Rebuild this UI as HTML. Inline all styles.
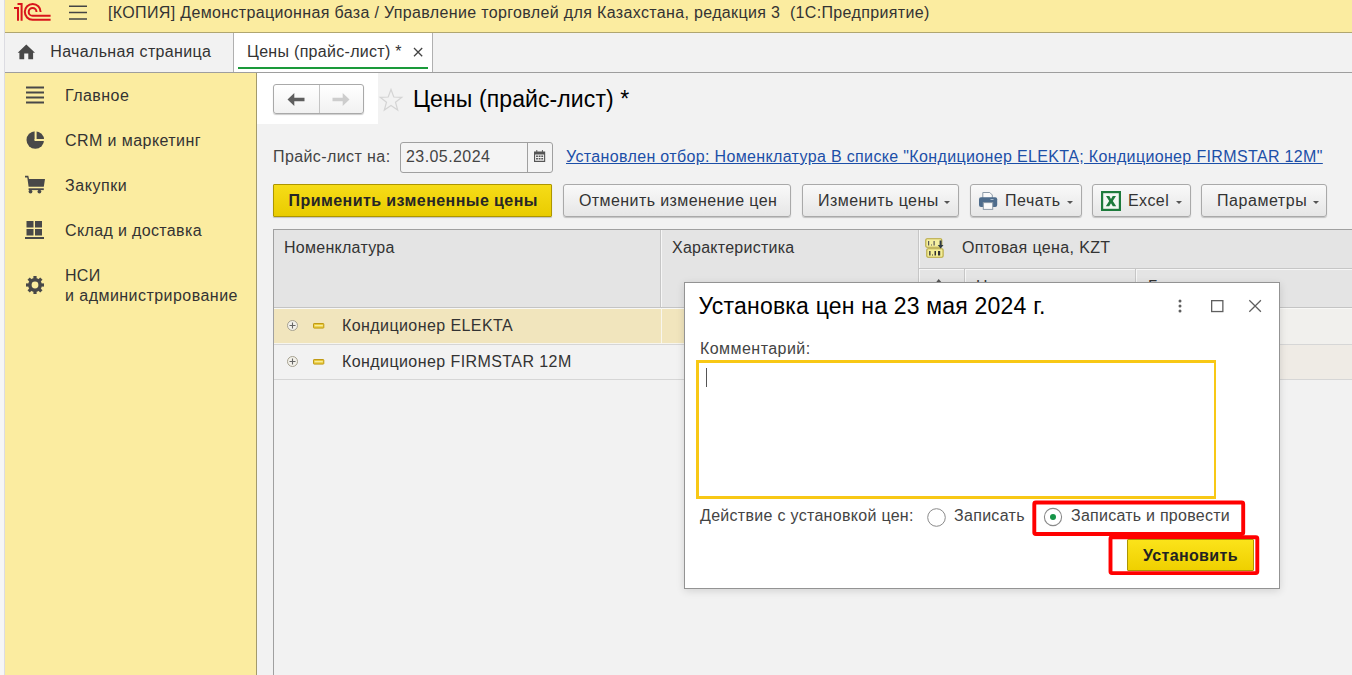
<!DOCTYPE html>
<html><head><meta charset="utf-8">
<style>
*{box-sizing:border-box;margin:0;padding:0}
html,body{width:1352px;height:675px;overflow:hidden;background:#f2f2f2}
body{position:relative;font-family:"Liberation Sans",sans-serif;font-size:16px;color:#333;letter-spacing:0.3px}
.a{position:absolute}
.t{position:absolute;white-space:pre;line-height:18px}
svg{position:absolute;overflow:visible}
.btn{position:absolute;border:1px solid #a9a9a9;border-radius:3px;background:linear-gradient(#f9f9f9,#e6e6e6);box-shadow:0 1px 1px rgba(0,0,0,0.2)}
.dd{position:absolute;width:0;height:0;border-left:3px solid transparent;border-right:3px solid transparent;border-top:3px solid #555}
</style></head><body>
<!-- left strip -->
<div class="a" style="left:0;top:0;width:5px;height:675px;background:#f6f6f6;border-right:1px solid #dcdce2"></div>
<!-- header -->
<div class="a" style="left:5px;top:0;width:1347px;height:33px;background:#fbeca0;border-bottom:1px solid #b0a670"></div>
<!-- 1C logo -->
<svg style="left:0;top:0" width="60" height="32" viewBox="0 0 60 32">
  <g fill="none" stroke="#d9141b" stroke-width="2">
    <path d="M14 8 H18 V20.8 M17.5 4 H21.6 V20.8"/>
    <path d="M40.6 11.9 A7.9 7.9 0 1 0 32.6 19.8 H50.6"/>
    <path d="M36.5 11.9 A3.9 3.9 0 1 0 32.6 15.8 H50.6"/>
  </g>
</svg>
<!-- hamburger -->
<svg style="left:69px;top:5px" width="18" height="15">
  <g stroke="#444" stroke-width="1.5"><path d="M0 1.3H18M0 7.5H18M0 14H18"/></g>
</svg>
<div class="t" style="left:108px;top:4px;color:#333;letter-spacing:0.35px">[КОПИЯ] Демонстрационная база / Управление торговлей для Казахстана, редакция 3  (1С:Предприятие)</div>

<!-- tab bar -->
<div class="a" style="left:5px;top:33px;width:1347px;height:40px;background:#f2f2f2;border-bottom:1px solid #9e9e9e"></div>
<svg style="left:17px;top:44px" width="19" height="16" viewBox="0 0 19 16">
  <path d="M9.3 0.5 L18 8.8 H16.1 V15.2 H11.3 V9.4 H7.2 V15.2 H2.4 V8.8 H0.7 Z" fill="#484848"/>
</svg>
<div class="t" style="left:50.3px;top:43px;color:#333;letter-spacing:0.34px">Начальная страница</div>
<div class="a" style="left:233px;top:33px;width:200px;height:39px;background:#fff;border-left:1px solid #b0b0b0;border-right:1px solid #b0b0b0"></div>
<div class="t" style="left:247px;top:43px;color:#333">Цены (прайс-лист) *</div>
<svg style="left:413px;top:47px" width="10" height="10"><g stroke="#444" stroke-width="1.3"><path d="M1 1L9.2 9.2M9.2 1L1 9.2"/></g></svg>
<div class="a" style="left:238px;top:67px;width:190px;height:2px;background:#1a9a3a"></div>

<!-- sidebar -->
<div class="a" style="left:5px;top:73px;width:252px;height:602px;background:#fbeca0;border-right:1px solid #a39a6c"></div>
<svg style="left:26px;top:86px" width="18" height="18"><g stroke="#484848" stroke-width="2.2"><path d="M0 1.5H18M0 6.5H18M0 11.5H18M0 16.5H18"/></g></svg>
<div class="t" style="left:65px;top:87px;letter-spacing:0.45px">Главное</div>
<svg style="left:20px;top:128px" width="30" height="30" viewBox="0 0 30 30">
  <circle cx="15.3" cy="12" r="8.8" fill="#484848"/>
  <rect x="14.6" y="1" width="2" height="11.2" fill="#fbeca0"/>
  <rect x="14.6" y="11" width="12" height="2" fill="#fbeca0"/>
</svg>
<div class="t" style="left:65px;top:132px;letter-spacing:0.43px">CRM и маркетинг</div>
<svg style="left:20px;top:170px" width="30" height="30" viewBox="0 0 30 30">
  <g fill="#484848">
  <path d="M5 5.8 H8.3 L9 9 H25 L23.8 16.8 H8.6 L7.3 7.4 H5 Z"/>
  <rect x="8.6" y="18.3" width="15.2" height="1.8"/>
  <circle cx="10.5" cy="21.6" r="1.9"/><circle cx="19.4" cy="21.6" r="1.9"/>
  </g>
</svg>
<div class="t" style="left:65px;top:177px;letter-spacing:0.55px">Закупки</div>
<svg style="left:25px;top:221px" width="19" height="18" viewBox="0 0 19 18">
  <g fill="#484848"><rect x="1.5" y="0" width="7" height="6.5"/><rect x="10" y="0" width="7" height="6.5"/><rect x="1.5" y="8" width="7" height="6.5"/><rect x="10" y="8" width="7" height="6.5"/><rect x="0" y="16" width="19" height="2"/></g>
</svg>
<div class="t" style="left:65px;top:222px;letter-spacing:0.36px">Склад и доставка</div>
<svg style="left:20px;top:270px" width="30" height="30" viewBox="0 0 30 30">
  <g transform="translate(15 15)" fill="#484848"><rect x="-1.6" y="-9" width="3.2" height="4" transform="rotate(0)"/><rect x="-1.6" y="-9" width="3.2" height="4" transform="rotate(45)"/><rect x="-1.6" y="-9" width="3.2" height="4" transform="rotate(90)"/><rect x="-1.6" y="-9" width="3.2" height="4" transform="rotate(135)"/><rect x="-1.6" y="-9" width="3.2" height="4" transform="rotate(180)"/><rect x="-1.6" y="-9" width="3.2" height="4" transform="rotate(225)"/><rect x="-1.6" y="-9" width="3.2" height="4" transform="rotate(270)"/><rect x="-1.6" y="-9" width="3.2" height="4" transform="rotate(315)"/>
  <circle r="6.9"/></g>
  <circle cx="15" cy="15" r="3.4" fill="#fbeca0"/>
</svg>
<div class="t" style="left:65px;top:267px">НСИ</div>
<div class="t" style="left:65px;top:287px;letter-spacing:0.46px">и администрирование</div>

<!-- content -->
<div class="a" style="left:257px;top:73px;width:121px;height:51px;background:#fff"></div>
<div class="btn" style="left:273px;top:84px;width:91px;height:30px;border-radius:3px;background:linear-gradient(#fff,#f1f1f1)"></div>
<div class="a" style="left:319px;top:85px;width:1px;height:28px;background:#c4c4c4"></div>
<svg style="left:287px;top:92px" width="18" height="15" viewBox="0 0 18 15"><path d="M0.5 7.5 L7.3 1 V5.7 H17.5 V9.3 H7.3 V14 Z" fill="#5e5e5e"/></svg>
<svg style="left:332px;top:92px" width="18" height="15" viewBox="0 0 18 15"><path d="M17.5 7.5 L10.7 1 V5.7 H0.5 V9.3 H10.7 V14 Z" fill="#cdcdcd"/></svg>
<svg style="left:379px;top:88px" width="24" height="24" viewBox="0 0 24 24"><path d="M12 1.5 L14.8 9 L22.8 9.3 L16.5 14.2 L18.7 22 L12 17.5 L5.3 22 L7.5 14.2 L1.2 9.3 L9.2 9 Z" fill="none" stroke="#d4d4d4" stroke-width="1.2"/></svg>
<div class="t" style="left:413px;top:86px;font-size:23px;line-height:26px;color:#000;letter-spacing:0.1px">Цены (прайс-лист) *</div>

<div class="t" style="left:273px;top:148px;color:#444;letter-spacing:0.41px">Прайс-лист на:</div>
<div class="a" style="left:400px;top:142px;width:153px;height:31px;border:1px solid #a0a0a0;border-radius:3px;background:#f4f4f4"></div>
<div class="a" style="left:527px;top:143px;width:1px;height:29px;background:#a0a0a0"></div>
<div class="t" style="left:406px;top:148px;color:#444;letter-spacing:0.42px">23.05.2024</div>
<svg style="left:534px;top:150px" width="11.2" height="12" viewBox="0 0 12 12" preserveAspectRatio="none"><path fill="#555" fill-rule="evenodd" d="M0 1.5H2.5V0H3.5V1.5H8.5V0H9.5V1.5H12V12H0Z M1.2 4.5V10.8H10.8V4.5Z M2.2 5.5H4.2V7H2.2Z M5 5.5H7V7H5Z M7.8 5.5H9.8V7H7.8Z M2.2 8H4.2V9.6H2.2Z M5 8H7V9.6H5Z M7.8 8H9.8V9.6H7.8Z"/></svg>
<div class="t" style="left:566px;top:148px;color:#1c4fa8;text-decoration:underline;letter-spacing:0.35px">Установлен отбор: Номенклатура В списке "Кондиционер ELEKTA; Кондиционер FIRMSTAR 12M"</div>

<!-- toolbar -->
<div class="a" style="left:273px;top:184px;width:279px;height:33px;border:1px solid #ad9600;border-radius:1px;background:linear-gradient(#f6dc18,#e9cc00);box-shadow:0 1px 1px rgba(0,0,0,0.2)"></div>
<div class="t" style="left:288.6px;top:192px;font-weight:bold;color:#262626;letter-spacing:0.43px">Применить измененные цены</div>
<div class="btn" style="left:563px;top:184px;width:228px;height:33px"></div>
<div class="t" style="left:579px;top:192px;letter-spacing:0.41px">Отменить изменение цен</div>
<div class="btn" style="left:802px;top:184px;width:157px;height:33px"></div>
<div class="t" style="left:818px;top:192px;letter-spacing:0.45px">Изменить цены</div>
<div class="dd" style="left:944px;top:201px"></div>
<div class="btn" style="left:970px;top:184px;width:112px;height:33px"></div>
<svg style="left:975px;top:186px" width="26" height="30" viewBox="0 0 26 30">
<path d="M7.8 6.5 H14.8 L17.3 9 V13 H7.8 Z" fill="#fafafa" stroke="#8c9aa8" stroke-width="1"/>
<rect x="4" y="11.2" width="18.2" height="9.8" rx="2" fill="#4e6c8c"/>
<rect x="15.5" y="13" width="3" height="1" fill="#a8bccf"/>
<rect x="8.3" y="16.6" width="9.4" height="6.8" fill="#fafafa" stroke="#8c9aa8" stroke-width="1"/>
</svg>
<div class="t" style="left:1005px;top:192px;letter-spacing:0.55px">Печать</div>
<div class="dd" style="left:1067px;top:201px"></div>
<div class="btn" style="left:1092px;top:184px;width:99px;height:33px"></div>
<svg style="left:1101px;top:191px" width="20" height="20" viewBox="0 0 20 20"><rect x="1.1" y="1.1" width="17.8" height="17.8" fill="#f4f8f4" stroke="#1e7b3c" stroke-width="2.2"/><path d="M5 5H8.3L10 8L11.7 5H15L11.8 9.9L15.2 15.3H11.8L10 12.2L8.2 15.3H4.8L8.2 9.9Z" fill="#1e7b3c"/></svg>
<div class="t" style="left:1128px;top:192px;letter-spacing:0.4px">Excel</div>
<div class="dd" style="left:1176px;top:201px"></div>
<div class="btn" style="left:1201px;top:184px;width:126px;height:33px"></div>
<div class="t" style="left:1217px;top:192px;letter-spacing:0.55px">Параметры</div>
<div class="dd" style="left:1313px;top:201px"></div>

<!-- table -->
<div class="a" style="left:273px;top:229px;width:1079px;height:446px;border-left:1px solid #a0a0a0;border-top:1px solid #a0a0a0;background:#f2f2f2"></div>
<div class="a" style="left:274px;top:230px;width:1078px;height:78px;background:#e4e4e4;border-bottom:1px solid #c4c4c4"></div>
<div class="a" style="left:660px;top:230px;width:1px;height:77px;background:#c6c6c6"></div><div class="a" style="left:661px;top:230px;width:1px;height:77px;background:#f6f6f6"></div>
<div class="a" style="left:918px;top:230px;width:1px;height:77px;background:#c6c6c6"></div><div class="a" style="left:919px;top:230px;width:1px;height:77px;background:#f6f6f6"></div>
<div class="a" style="left:919px;top:268px;width:433px;height:1px;background:#c6c6c6"></div><div class="a" style="left:920px;top:269px;width:432px;height:1px;background:#f6f6f6"></div>
<div class="a" style="left:964px;top:269px;width:1px;height:38px;background:#c6c6c6"></div><div class="a" style="left:965px;top:269px;width:1px;height:38px;background:#f6f6f6"></div>
<div class="a" style="left:1135px;top:269px;width:1px;height:38px;background:#c6c6c6"></div><div class="a" style="left:1136px;top:269px;width:1px;height:38px;background:#f6f6f6"></div>
<div class="t" style="left:284px;top:239px;letter-spacing:0.27px">Номенклатура</div>
<div class="t" style="left:672px;top:239px;letter-spacing:0.25px">Характеристика</div>
<svg style="left:920px;top:232px" width="30" height="30" viewBox="0 0 30 30">
<rect x="5.8" y="6.7" width="16" height="8.6" rx="1.2" fill="#f4eea0" stroke="#b5a53a" stroke-width="1.1"/>
<rect x="6.8" y="16.7" width="16.3" height="8.6" rx="1.2" fill="#f4ee98" stroke="#b5a53a" stroke-width="1.1"/>
<g fill="#555"><rect x="8" y="9" width="1.2" height="4.5"/><rect x="11" y="12.5" width="1" height="1"/><rect x="13.5" y="9" width="1.2" height="4.5"/></g>
<g fill="#333"><rect x="9.2" y="19" width="1.3" height="4.5"/><rect x="12" y="22.5" width="1" height="1"/><rect x="14.5" y="19" width="1.5" height="4.5"/><rect x="18" y="19" width="2.2" height="4.5"/></g>
<path d="M19.6 8.5 H21.6 V13 H23.5 L20.6 16.6 L17.7 13 H19.6 Z" fill="#2f3a44"/>
</svg>
<div class="t" style="left:962px;top:239px;letter-spacing:0.37px">Оптовая цена, KZT</div>
<svg style="left:935px;top:278px" width="8" height="6"><path d="M0.5 5 L3.7 1 L7 5 Z" fill="#555"/></svg><div class="t" style="left:976px;top:278px">Ц</div>
<div class="t" style="left:1148px;top:278px">Б</div>
<!-- rows -->
<div class="a" style="left:274px;top:308px;width:1078px;height:37px;background:#f1f0ed;border-bottom:1px solid #d6d6d6"></div>
<div class="a" style="left:274px;top:308px;width:1078px;height:1px;background:#f8f8f6"></div><div class="a" style="left:274px;top:309px;width:410px;height:34px;background:#f1e5bd"></div><div class="a" style="left:274px;top:343px;width:410px;height:1px;background:#f7f5ee"></div>
<div class="a" style="left:274px;top:345px;width:1078px;height:35px;background:#f2f2f2;border-bottom:1px solid #d6d6d6"></div>
<div class="a" style="left:1136px;top:345px;width:216px;height:34px;background:#efebe5"></div>
<div class="a" style="left:661px;top:308px;width:1px;height:36px;background:#f8f6ee"></div>
<svg style="left:287px;top:320px" width="12" height="12" viewBox="0 0 12 12"><circle cx="5.5" cy="5.5" r="5" fill="#f3f1ea" stroke="#a6a190"/><path d="M5.5 2.5V8.5M2.5 5.5H8.5" stroke="#666" stroke-width="1.1"/></svg>
<svg style="left:313px;top:323px" width="12" height="6"><rect x="0.5" y="0.5" width="10.3" height="4.6" rx="0.6" fill="#e9c93a" stroke="#c09a14"/><rect x="1.6" y="2" width="8.2" height="1.3" fill="#f8ec9a"/></svg>
<div class="t" style="left:342px;top:317px;letter-spacing:0.42px">Кондиционер ELEKTA</div>
<svg style="left:287px;top:356px" width="12" height="12" viewBox="0 0 12 12"><circle cx="5.5" cy="5.5" r="5" fill="#f3f1ea" stroke="#a6a190"/><path d="M5.5 2.5V8.5M2.5 5.5H8.5" stroke="#666" stroke-width="1.1"/></svg>
<svg style="left:313px;top:359px" width="12" height="6"><rect x="0.5" y="0.5" width="10.3" height="4.6" rx="0.6" fill="#e9c93a" stroke="#c09a14"/><rect x="1.6" y="2" width="8.2" height="1.3" fill="#f8ec9a"/></svg>
<div class="t" style="left:342px;top:353px;letter-spacing:0.42px">Кондиционер FIRMSTAR 12M</div>

<!-- dialog -->
<div class="a" style="left:684px;top:282px;width:596px;height:307px;background:#fff;border:1px solid #939393;box-shadow:0 2px 8px rgba(0,0,0,0.13)"></div>
<div class="t" style="left:698.6px;top:293px;font-size:23px;line-height:26px;color:#000;letter-spacing:0.2px">Установка цен на 23 мая 2024 г.</div>
<svg style="left:1178px;top:299px" width="4" height="14"><g fill="#5f5f5f"><circle cx="2" cy="2" r="1.5"/><circle cx="2" cy="7" r="1.5"/><circle cx="2" cy="12.1" r="1.5"/></g></svg>
<svg style="left:1211px;top:300px" width="13" height="12"><rect x="0.65" y="0.65" width="11.2" height="10.9" fill="none" stroke="#5f5f5f" stroke-width="1.3"/></svg>
<svg style="left:1249px;top:300px" width="13" height="12"><g stroke="#5f5f5f" stroke-width="1.25"><path d="M0.3 0.3L11.9 11.7M11.9 0.3L0.3 11.7"/></g></svg>
<div class="t" style="left:700px;top:340px;color:#444;letter-spacing:0.45px">Комментарий:</div>
<div class="a" style="left:696px;top:360px;width:520px;height:139px;border:3px solid #f8c815;border-right-width:2px;background:#fff"></div>
<div class="a" style="left:706px;top:368px;width:1.2px;height:19px;background:#555"></div>
<div class="t" style="left:700px;top:507px;color:#444;letter-spacing:0.3px">Действие с установкой цен:</div>
<svg style="left:927px;top:508px" width="19" height="19"><circle cx="9.5" cy="9.5" r="8.8" fill="#fff" stroke="#8a8a8a" stroke-width="1"/></svg>
<div class="t" style="left:954px;top:507px;color:#444;letter-spacing:0.3px">Записать</div>
<svg style="left:1044px;top:508px" width="19" height="19"><circle cx="9" cy="9" r="8.6" fill="#fff" stroke="#8a8a8a" stroke-width="1.1"/><circle cx="9" cy="8.9" r="3" fill="#159447"/></svg>
<div class="t" style="left:1071px;top:507px;color:#444;letter-spacing:0.25px">Записать и провести</div>
<svg style="left:0;top:0" width="1352" height="675"><rect x="1034.3" y="502.5" width="208.9" height="31.5" rx="1.5" fill="none" stroke="#ff0000" stroke-width="3.9"/><rect x="1110.5" y="537.3" width="146.8" height="35.8" rx="1.5" fill="none" stroke="#ff0000" stroke-width="3.9"/></svg>
<div class="a" style="left:1127px;top:539px;width:127px;height:32px;border:1px solid #ad9600;border-radius:1px;background:linear-gradient(#fbe31a,#efd000)"></div>
<div class="t" style="left:1143px;top:547px;font-weight:bold;color:#222;letter-spacing:0.35px">Установить</div>

</body></html>
